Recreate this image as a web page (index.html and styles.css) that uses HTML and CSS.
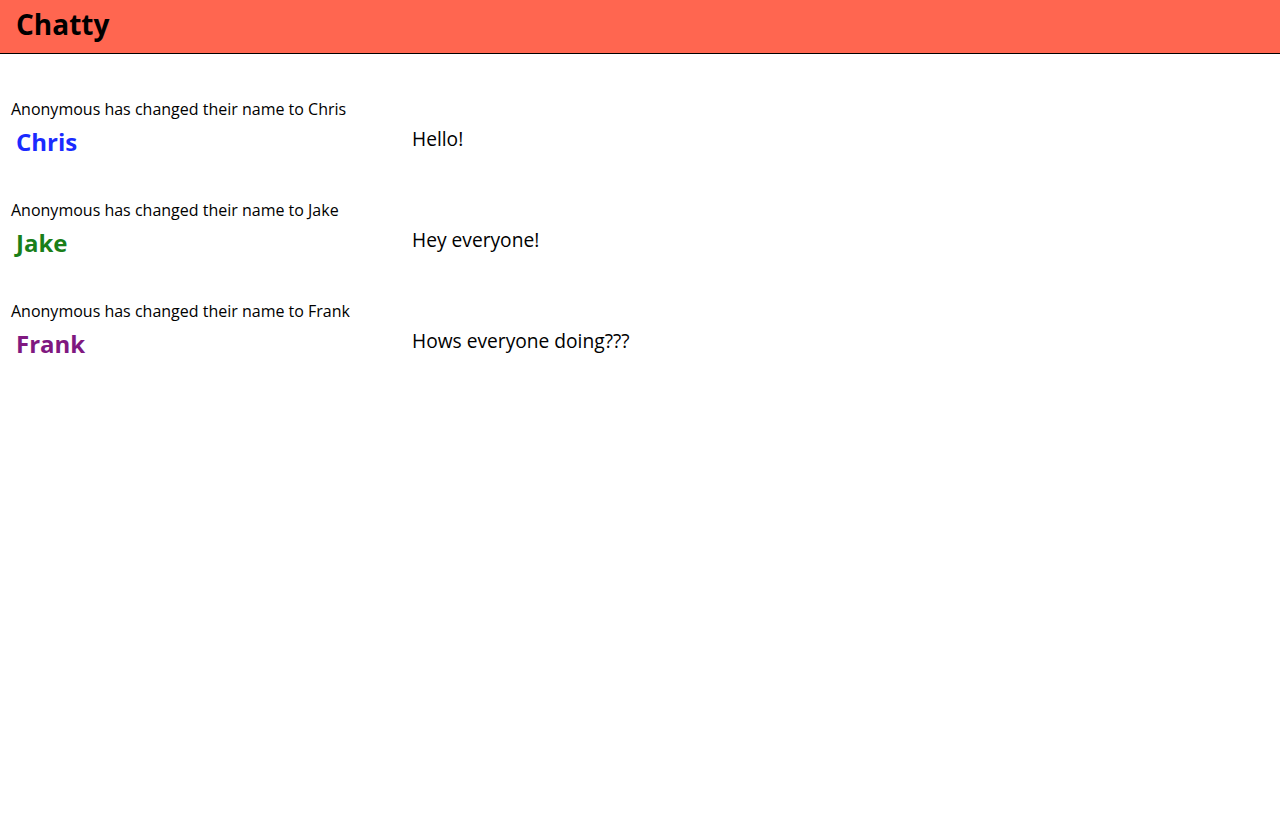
FILE: index.html
```html
<!DOCTYPE html>
<html>
<head>
<meta charset="utf-8">
<link rel="stylesheet" href="styles.css">
</head>
<body>
<header class="topbar">
  <h1 class="brand">Chatty</h1>
</header>
<main class="chat">
  <div class="entry">
    <div class="notice">Anonymous has changed their name to Chris</div>
    <div class="line">
      <span class="author author-blue">Chris</span>
      <span class="text">Hello!</span>
    </div>
  </div>
  <div class="entry">
    <div class="notice">Anonymous has changed their name to Jake</div>
    <div class="line">
      <span class="author author-green">Jake</span>
      <span class="text">Hey everyone!</span>
    </div>
  </div>
  <div class="entry">
    <div class="notice">Anonymous has changed their name to Frank</div>
    <div class="line">
      <span class="author author-purple">Frank</span>
      <span class="text">Hows everyone doing???</span>
    </div>
  </div>
</main>
</body>
</html>
```

FILE: styles.css
```css
html, body {
  margin: 0;
  padding: 0;
  background: #ffffff;
  font-family: "Open Sans", "Liberation Sans", sans-serif;
  color: #000;
}

.topbar {
  height: 53px;
  box-sizing: content-box;
  background: #ff6650;
  border-bottom: 1px solid #000;
  display: flex;
  align-items: center;
  padding: 0 16px;
}

.brand {
  margin: 0 0 5px;
  font-size: 28px;
  font-weight: 700;
  line-height: 1;
}

.chat {
  padding: 44px 11px 0;
  display: flex;
  flex-direction: column;
  gap: 42px;
}

.entry {
  display: flex;
  flex-direction: column;
}

.notice {
  font-size: 16px;
  line-height: 22px;
}

.line {
  display: grid;
  grid-template-columns: 396px 1fr;
  align-items: start;
  padding-left: 5px;
  margin-top: 7px;
}

.author {
  font-size: 24px;
  font-weight: 700;
  line-height: 30px;
}

.author-blue { color: #1a2bff; }
.author-green { color: #1a7f1a; }
.author-purple { color: #801880; }

.text {
  font-size: 19.2px;
  line-height: 24px;
}
```
